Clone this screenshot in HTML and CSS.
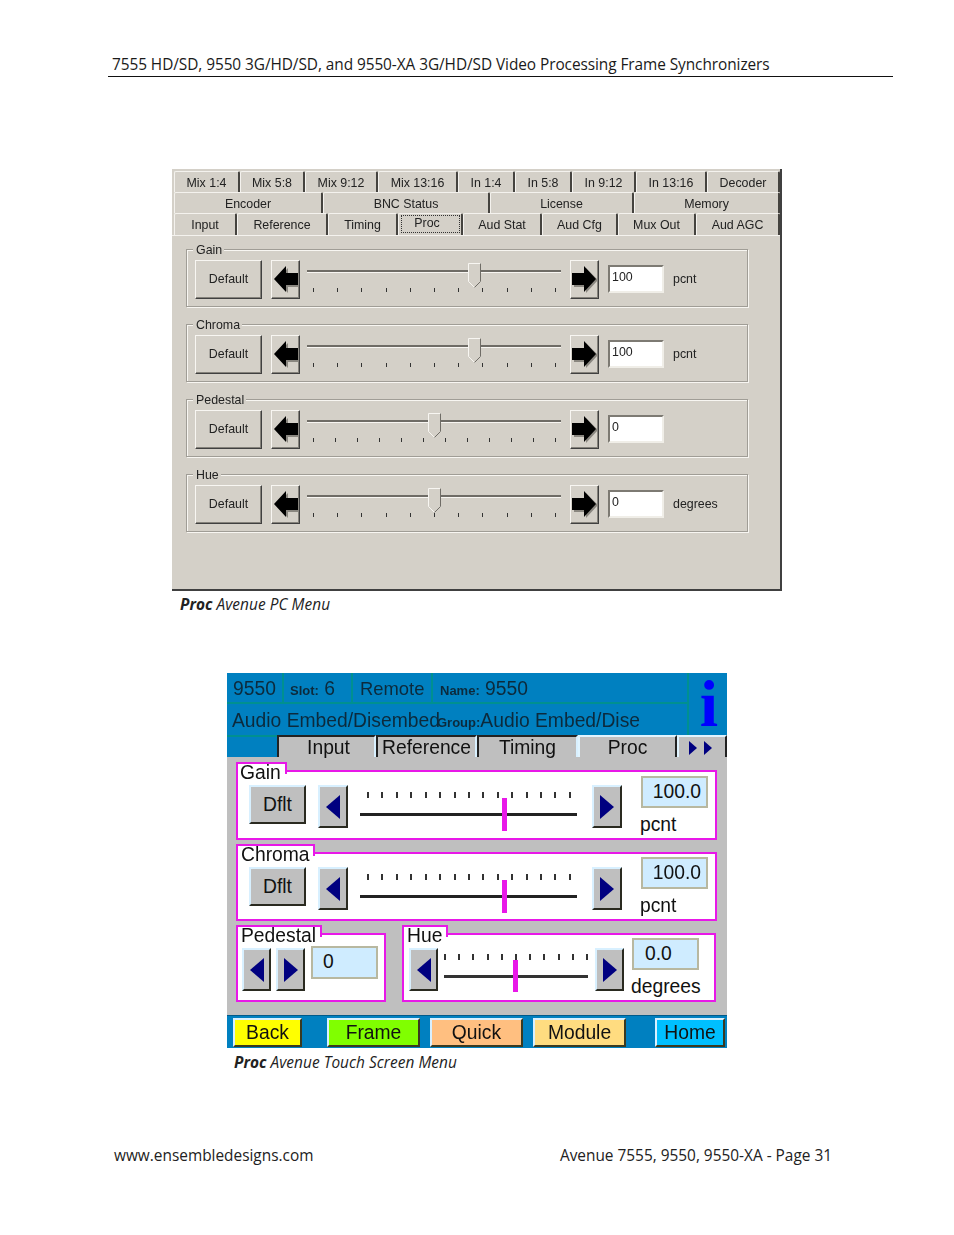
FILE: index.html
```html
<!DOCTYPE html>
<html lang="en">
<head>
<meta charset="utf-8">
<title>Proc Avenue Menus</title>
<link rel="stylesheet" href="styles.css">
</head>
<body>
<svg class="defs" width="0" height="0" aria-hidden="true">
  <defs>
    <g id="arrow-left">
      <polygon points="5,20 17,8 17,14 28,14 28,27 17,27 17,33" fill="#8a8780"/>
      <polygon points="3,19 15,6 15,13 27,13 27,25 15,25 15,32" fill="#000"/>
    </g>
    <g id="arrow-right">
      <polygon points="28,20 16,8 16,14 4,14 4,27 16,27 16,33" fill="#8a8780"/>
      <polygon points="26,19 14,6 14,13 2,13 2,25 14,25 14,32" fill="#000"/>
    </g>
    <g id="slider-thumb">
      <polygon points="0.5,0.5 12.5,0.5 12.5,18.5 6.5,24.5 0.5,18.5" fill="#d4d0c8" stroke="#f8f6f2"/>
      <polyline points="12.5,0.5 12.5,18.5 6.5,24.5" fill="none" stroke="#6f6c66"/>
    </g>
  </defs>
</svg>

<header class="doc-head">7555 HD/SD, 9550 3G/HD/SD, and 9550-XA 3G/HD/SD Video Processing Frame Synchronizers</header>

<section class="pc">
  <div class="tabs r1">
    <span class="tab">Mix 1:4</span><span class="tab">Mix 5:8</span><span class="tab">Mix 9:12</span><span class="tab">Mix 13:16</span><span class="tab">In 1:4</span><span class="tab">In 5:8</span><span class="tab">In 9:12</span><span class="tab">In 13:16</span><span class="tab">Decoder</span>
  </div>
  <div class="tabs r2">
    <span class="tab">Encoder</span><span class="tab">BNC Status</span><span class="tab">License</span><span class="tab">Memory</span>
  </div>
  <div class="tabs r3">
    <span class="tab">Input</span><span class="tab">Reference</span><span class="tab">Timing</span><span class="tab sel"><i>Proc</i></span><span class="tab">Aud Stat</span><span class="tab">Aud Cfg</span><span class="tab">Mux Out</span><span class="tab">Aud AGC</span>
  </div>
  <div class="pane">
    <div class="grp"><span class="lg">Gain</span>
      <button class="btn def">Default</button>
      <button class="btn arr"><svg width="29" height="39"><use href="#arrow-left"/></svg></button>
      <div class="sl"><b class="trk"></b><svg class="thumb" width="13" height="25" style="left:161px"><use href="#slider-thumb"/></svg><div class="tk"><u></u><u></u><u></u><u></u><u></u><u></u><u></u><u></u><u></u><u></u><u></u></div></div>
      <button class="btn arr"><svg width="29" height="39"><use href="#arrow-right"/></svg></button>
      <div class="inp">100</div><span class="un">pcnt</span>
    </div>
    <div class="grp"><span class="lg">Chroma</span>
      <button class="btn def">Default</button>
      <button class="btn arr"><svg width="29" height="39"><use href="#arrow-left"/></svg></button>
      <div class="sl"><b class="trk"></b><svg class="thumb" width="13" height="25" style="left:161px"><use href="#slider-thumb"/></svg><div class="tk"><u></u><u></u><u></u><u></u><u></u><u></u><u></u><u></u><u></u><u></u><u></u></div></div>
      <button class="btn arr"><svg width="29" height="39"><use href="#arrow-right"/></svg></button>
      <div class="inp">100</div><span class="un">pcnt</span>
    </div>
    <div class="grp"><span class="lg">Pedestal</span>
      <button class="btn def">Default</button>
      <button class="btn arr"><svg width="29" height="39"><use href="#arrow-left"/></svg></button>
      <div class="sl"><b class="trk"></b><svg class="thumb" width="13" height="25" style="left:121px"><use href="#slider-thumb"/></svg><div class="tk"><u></u><u></u><u></u><u></u><u></u><u></u><u></u><u></u><u></u><u></u><u></u><u></u></div></div>
      <button class="btn arr"><svg width="29" height="39"><use href="#arrow-right"/></svg></button>
      <div class="inp">0</div>
    </div>
    <div class="grp"><span class="lg">Hue</span>
      <button class="btn def">Default</button>
      <button class="btn arr"><svg width="29" height="39"><use href="#arrow-left"/></svg></button>
      <div class="sl"><b class="trk"></b><svg class="thumb" width="13" height="25" style="left:121px"><use href="#slider-thumb"/></svg><div class="tk"><u></u><u></u><u></u><u></u><u></u><u></u><u></u><u></u><u></u><u></u><u></u></div></div>
      <button class="btn arr"><svg width="29" height="39"><use href="#arrow-right"/></svg></button>
      <div class="inp">0</div><span class="un">degrees</span>
    </div>
  </div>
</section>
<p class="cap cap-a"><strong>Proc</strong> Avenue PC Menu</p>

<section class="ts">
  <div class="ts-head">
    <div class="ts-left">
      <div class="ts-row one">
        <span class="c c1">9550</span>
        <span class="c c2"><small>Slot:</small> 6</span>
        <span class="c c3">Remote</span>
        <span class="c c4"><small>Name:</small> 9550</span>
      </div>
      <div class="ts-row two">
        <span class="c5">Audio Embed/Disembed</span>
        <span class="c6"><small>Group:</small>Audio Embed/Dise</span>
      </div>
    </div>
    <div class="ts-info">i</div>
  </div>
  <div class="ts-tabs">
    <span class="tt t1">Input</span><span class="tt t2">Reference</span><span class="tt t3">Timing</span><span class="tt on t4">Proc</span><span class="tt on t5"><svg width="36" height="14" viewBox="0 0 36 14"><polygon points="0,0 8,7 0,14" fill="#000080"/><polygon points="15,0 23,7 15,14" fill="#000080"/></svg></span>
  </div>
  <div class="ts-body">
    <div class="tg wide a"><span class="tl tl-gain">Gain</span>
      <button class="rb dflt">Dflt</button>
      <button class="rb ar"><svg width="14" height="24" viewBox="0 0 14 24"><polygon points="14,0 14,24 0,12" fill="#000080"/></svg></button>
      <div class="ts-sl"><div class="tt-k"><u></u><u></u><u></u><u></u><u></u><u></u><u></u><u></u><u></u><u></u><u></u><u></u><u></u><u></u><u></u></div><b class="ln"></b><b class="mg" style="left:142px"></b></div>
      <button class="rb ar"><svg width="14" height="24" viewBox="0 0 14 24"><polygon points="0,0 0,24 14,12" fill="#000080"/></svg></button>
      <div class="vals"><div class="val">100.0</div><span class="vu">pcnt</span></div>
    </div>
    <div class="tg wide b"><span class="tl tl-chroma">Chroma</span>
      <button class="rb dflt">Dflt</button>
      <button class="rb ar"><svg width="14" height="24" viewBox="0 0 14 24"><polygon points="14,0 14,24 0,12" fill="#000080"/></svg></button>
      <div class="ts-sl"><div class="tt-k"><u></u><u></u><u></u><u></u><u></u><u></u><u></u><u></u><u></u><u></u><u></u><u></u><u></u><u></u><u></u></div><b class="ln"></b><b class="mg" style="left:142px"></b></div>
      <button class="rb ar"><svg width="14" height="24" viewBox="0 0 14 24"><polygon points="0,0 0,24 14,12" fill="#000080"/></svg></button>
      <div class="vals"><div class="val">100.0</div><span class="vu">pcnt</span></div>
    </div>
    <div class="tg-row">
      <div class="tg ped"><span class="tl tl-ped">Pedestal</span>
        <button class="rb ar"><svg width="14" height="24" viewBox="0 0 14 24"><polygon points="14,0 14,24 0,12" fill="#000080"/></svg></button>
        <button class="rb ar"><svg width="14" height="24" viewBox="0 0 14 24"><polygon points="0,0 0,24 14,12" fill="#000080"/></svg></button>
        <div class="val v-ped">0</div>
      </div>
      <div class="tg hue"><span class="tl tl-hue">Hue</span>
        <button class="rb ar"><svg width="14" height="24" viewBox="0 0 14 24"><polygon points="14,0 14,24 0,12" fill="#000080"/></svg></button>
        <div class="ts-sl sm"><div class="tt-k"><u></u><u></u><u></u><u></u><u></u><u></u><u></u><u></u><u></u><u></u><u></u></div><b class="ln"></b><b class="mg" style="left:69px"></b></div>
        <button class="rb ar"><svg width="14" height="24" viewBox="0 0 14 24"><polygon points="0,0 0,24 14,12" fill="#000080"/></svg></button>
        <div class="vals vh"><div class="val v-hue">0.0</div><span class="vu">degrees</span></div>
      </div>
    </div>
  </div>
  <div class="ts-foot">
    <button class="fb back">Back</button>
    <button class="fb frame">Frame</button>
    <button class="fb quick">Quick</button>
    <button class="fb module">Module</button>
    <button class="fb home">Home</button>
  </div>
</section>
<p class="cap cap-b"><strong>Proc</strong> Avenue Touch Screen Menu</p>

<footer class="doc-foot">
  <span>www.ensembledesigns.com</span>
  <span>Avenue 7555, 9550, 9550-XA - Page 31</span>
</footer>
</body>
</html>
```
FILE: styles.css
```css
* { box-sizing: border-box; }
html, body { margin: 0; padding: 0; background: #fff; }
body { width: 954px; height: 1235px; overflow: hidden; font-family: "Open Sans", "Noto Sans", sans-serif; color: #1a1a1a; }
.defs { position: absolute; }
button { font: inherit; color: inherit; padding: 0; margin: 0; }

.doc-head { margin: 54px 0 0 108px; width: 785px; height: 23px; padding-left: 4px; border-bottom: 1px solid #111; font-size: 15.4px; line-height: 21px; letter-spacing: -0.065px; white-space: nowrap; }

.pc { margin: 92px 0 0 172px; width: 610px; height: 422px; padding: 2px 0 0 2px; background: #d4d0c8; border-right: 2px solid #404040; border-bottom: 2px solid #404040; font-family: "Liberation Sans", sans-serif; font-size: 12.4px; color: #222; filter: blur(.3px); }
.tabs { display: grid; height: 21px; }
.r1 { grid-template-columns: 66px 65px 73px 80px 57px 57px 64px 71px 73px; }
.r2 { grid-template-columns: 149px 167px 144px 146px; }
.r3 { grid-template-columns: 63px 91px 70px 65px 79px 76px 78px 84px; height: 22px; }
.tab { display: flex; align-items: center; justify-content: center; border-top: 1px solid #f4f2ee; border-left: 1px solid #f4f2ee; border-right: 2px solid #45433f; border-radius: 2px 2px 0 0; padding-top: 2px; }
.r3 .tab { padding-top: 1px; }
.r3 .sel { background: #d4d0c8; align-items: flex-start; padding-top: 1px; }
.sel i { font-style: normal; display: block; width: 59px; height: 18px; line-height: 15px; text-align: center; padding-right: 6px; border: 1px dotted #333; }
.pane { margin-left: -2px; height: 356px; border-top: 1px solid #f4f2ee; padding: 13px 0 0 14px; }
.grp { position: relative; display: flex; align-items: flex-start; gap: 9px; width: 562px; height: 58px; margin-bottom: 17px; padding: 10px 0 0 8px; border: 1px solid #a09d96; box-shadow: inset 1px 1px 0 #f8f6f2, 1px 1px 0 #f8f6f2; }
.lg { position: absolute; left: 6px; top: -7px; padding: 0 2px 0 3px; background: #d4d0c8; line-height: 15px; }
.btn { display: flex; align-items: center; justify-content: center; height: 39px; padding-bottom: 1px; background: #d4d0c8; border: 1px solid; border-color: #f8f6f2 #404040 #404040 #f8f6f2; box-shadow: inset -1px -1px 0 #85827b; }
.def { width: 67px; }
.arr { width: 29px; padding-bottom: 0; }
.arr svg { flex: none; margin: -1px; }
.sl { position: relative; width: 254px; height: 39px; margin: 0 0 0 -2px; }
.trk { position: absolute; left: 0; right: 0; top: 10px; height: 3px; background: #6f6c66; border-bottom: 1px solid #f8f6f2; }
.thumb { position: absolute; top: 3px; }
.tk { position: absolute; left: 6px; right: 5px; top: 28px; display: flex; justify-content: space-between; }
.tk u { width: 1px; height: 4px; background: #333; }
.inp { width: 56px; height: 28px; margin-top: 5px; padding: 3px 0 0 2px; background: #fff; border: 2px solid; border-color: #7d7a73 #f0eee8 #f0eee8 #7d7a73; line-height: 14px; }
.un { margin-top: 11px; line-height: 16px; }

.cap { margin: 0; font-size: 15.4px; line-height: 20px; font-style: italic; letter-spacing: 0.05px; color: #222; }
.cap strong { font-weight: 700; }
.cap-a { padding: 4px 0 0 180px; }
.cap-b { padding: 5px 0 0 234px; }

.ts { margin: 58px 0 0 227px; width: 500px; height: 375px; font-family: "Liberation Sans", sans-serif; font-size: 19.3px; color: #111; background: #bfbfbf; filter: blur(.3px); }
.ts-head { display: grid; grid-template-columns: 462px 38px; height: 62px; background: #0080c0; }
.ts-left { border-right: 2px solid #009090; }
.ts-row { display: flex; align-items: center; color: #0c2a3c; }
.one { height: 31px; border-bottom: 2px solid #009090; }
.two { height: 31px; padding-top: 2px; }
.c { display: block; height: 100%; line-height: 32px; border-right: 2px solid #009090; padding-left: 6px; white-space: nowrap; }
.c small { font-size: 13px; font-weight: 700; }
.c1 { width: 57px; }
.c2 { width: 69px; padding-left: 6px; }
.c3 { width: 80px; padding-left: 7px; font-size: 18.4px; }
.c4 { border: 0; padding-left: 7px; }
.c5 { width: 211px; padding-left: 5px; white-space: nowrap; flex: none; }
.c6 { white-space: nowrap; margin-left: -1px; }
.c6 small { font-size: 13px; font-weight: 700; }
.ts-info { color: #0000ff; font-family: "Liberation Serif", serif; font-weight: 700; font-size: 66px; line-height: 62px; text-align: center; padding-left: 2px; }
.ts-tabs { display: flex; height: 22px; background: #0080c0; box-shadow: inset 0 2px 0 #009090; padding-left: 50px; align-items: stretch; }
.tt { display: flex; align-items: center; justify-content: center; background: #bfbfbf; border-top: 2px solid #222; border-left: 2px solid #222; border-right: 2px solid #d8f0ff; line-height: 20px; padding-top: 1px; }
.t1 { width: 99px; padding-left: 4px; }
.t2 { width: 101px; }
.t3 { width: 101px; }
.on { border-top-color: #e0f4ff; border-left-color: #e0f4ff; border-right-color: #222; }
.t4 { width: 99px; }
.t5 { width: 50px; padding-left: 10px; }
.ts-body { height: 258px; padding: 13px 10px 0 9px; }
.tg { position: relative; display: flex; background: #fff; border: 2px solid #e818e8; }
.tl { position: absolute; left: -2px; top: -10px; height: 12px; background: #fff; border: 2px solid #e818e8; border-bottom: 0; padding-left: 2px; line-height: 18px; white-space: nowrap; }
.tl-gain { width: 51px; }
.tl-chroma { width: 79px; padding-left: 3px; line-height: 17px; }
.tl-ped { width: 86px; padding-left: 3px; }
.tl-hue { width: 46px; padding-left: 3px; }
.wide { width: 481px; height: 70px; padding: 13px 0 0 11px; margin-bottom: 12px; }
.wide.b { height: 69px; }
.wide.b .vals { margin-top: -10px; }
.rb { display: flex; align-items: center; justify-content: center; height: 43px; background: #bfbfbf; border: 2px solid; border-color: #d8f0ff #2a2a20 #2a2a20 #d8f0ff; }
.dflt { width: 57px; height: 39px; margin-right: 12px; }
.ar { width: 30px; }
.ts-sl { position: relative; width: 217px; height: 46px; margin: 0 15px 0 12px; }
.tt-k { position: absolute; left: 7px; right: 6px; top: 7px; display: flex; justify-content: space-between; }
.tt-k u { width: 2px; height: 6px; background: #333; }
.ln { position: absolute; left: 0; right: 0; top: 28px; height: 3px; background: #222; }
.mg { position: absolute; top: 13px; width: 5px; height: 33px; background: #e818e8; }
.vals { display: flex; flex-direction: column; margin: -9px 0 0 19px; }
.val { width: 67px; height: 32px; background: #cfecff; border: 2px solid #b8b8a0; text-align: right; padding-right: 5px; line-height: 27px; }
.vu { line-height: 26px; margin: 4px 0 0 -1px; }
.tg-row { display: flex; gap: 16px; }
.ped { width: 150px; height: 69px; padding: 13px 0 0 4px; gap: 5px; }
.ped .ar, .hue .ar { width: 29px; }
.ped .val { margin: -2px 0 0 1px; text-align: left; padding: 0 0 0 10px; height: 33px; }
.hue { width: 314px; height: 69px; padding: 13px 0 0 5px; }
.sm { width: 144px; margin: 0 7px 0 6px; }
.sm .tt-k { top: 6px; left: 0; right: 0; }
.sm .ln { top: 27px; background: #333; }
.sm .mg { top: 12px; height: 32px; }
.vh { margin: -10px 0 0 8px; }
.v-hue { height: 33px; text-align: left; padding: 0 0 0 11px; }
.ts-foot { display: flex; height: 33px; padding: 2px 0 0 6px; background: #0080c0; border-top: 1px solid #005a8a; }
.fb { height: 29px; border: 2px solid; border-color: #d8f0ff #3a3a20 #3a3a20 #d8f0ff; line-height: 25px; }
.back { width: 69px; background: #ffff00; margin-right: 25px; }
.frame { width: 93px; background: #80ff00; margin-right: 10px; }
.quick { width: 93px; background: #ffbf80; margin-right: 10px; }
.module { width: 93px; background: #ffdc80; margin-right: 29px; }
.home { width: 70px; background: #00bfff; }

.doc-foot { display: flex; justify-content: space-between; width: 718px; margin: 73px 0 0 114px; font-size: 15.4px; line-height: 20px; letter-spacing: 0px; color: #222; }
```
